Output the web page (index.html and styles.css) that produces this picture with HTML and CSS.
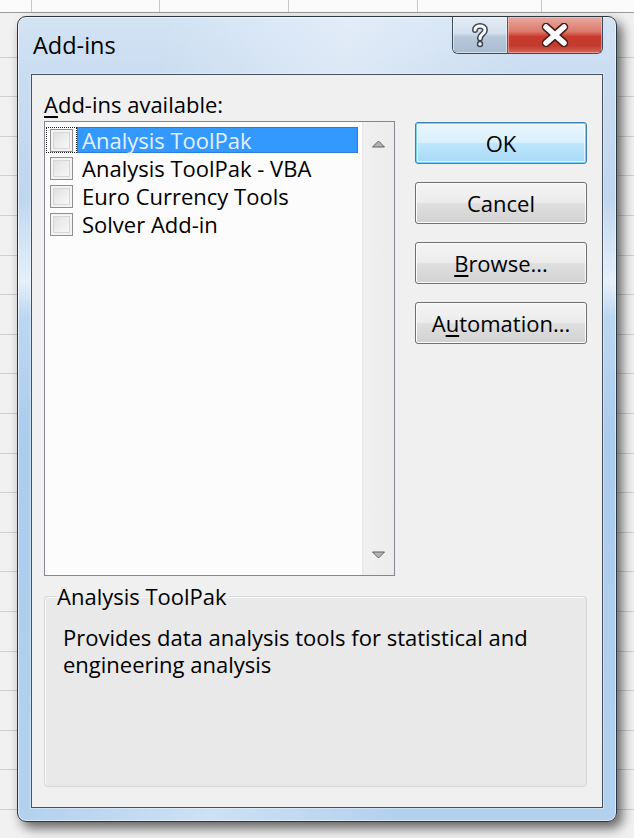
FILE: index.html
```html
<!DOCTYPE html>
<html lang="en">
<head>
<meta charset="utf-8">
<title>Add-ins</title>
<link rel="stylesheet" href="styles.css">
</head>
<body>
<div class="sheet-header">
  <div class="hcell c0"></div>
  <div class="hcell c1"></div>
  <div class="hcell c2"></div>
  <div class="hcell c3"></div>
  <div class="hcell c4"></div>
  <div class="hcell c5"></div>
</div>
<div class="window">
  <div class="titlebar">
    <div class="title">Add-ins</div>
    <div class="caption-buttons">
      <div class="cap-btn help">
        <svg width="20" height="26" viewBox="0 0 20 26">
          <path d="M5 8 C5 2.5 15 2.5 15 8 C15 12 10 12 10 16.5" fill="none" stroke="#3a4656" stroke-width="6" stroke-linecap="round"/>
          <circle cx="10" cy="22" r="3.2" fill="#3a4656"/>
          <path d="M5 8 C5 2.5 15 2.5 15 8 C15 12 10 12 10 16.5" fill="none" stroke="#ffffff" stroke-width="3" stroke-linecap="round"/>
          <circle cx="10" cy="22" r="1.7" fill="#ffffff"/>
        </svg>
      </div>
      <div class="cap-btn close">
        <svg width="30" height="24" viewBox="0 0 30 24">
          <path d="M6 4 L24 20 M24 4 L6 20" stroke="#4a1c18" stroke-width="8.5" stroke-linecap="round"/>
          <path d="M6 4 L24 20 M24 4 L6 20" stroke="#ffffff" stroke-width="5.5" stroke-linecap="round"/>
        </svg>
      </div>
    </div>
  </div>
  <div class="client">
    <div class="list-label"><u>A</u>dd-ins available:</div>
    <div class="main-row">
      <div class="listbox">
        <ul class="items">
          <li class="item">
            <span class="focus"><span class="check"></span></span>
            <span class="text selected">Analysis ToolPak</span>
          </li>
          <li class="item">
            <span class="nofocus"><span class="check"></span></span>
            <span class="text">Analysis ToolPak - VBA</span>
          </li>
          <li class="item">
            <span class="nofocus"><span class="check"></span></span>
            <span class="text">Euro Currency Tools</span>
          </li>
          <li class="item">
            <span class="nofocus"><span class="check"></span></span>
            <span class="text">Solver Add-in</span>
          </li>
        </ul>
        <div class="scrollbar">
          <svg class="arrow" width="13" height="8" viewBox="0 0 13 8">
            <path d="M0.5 7 L6.5 1 L12.5 7 Z" fill="#b4b4b4" stroke="#606060" stroke-width="1" stroke-linejoin="round"/>
          </svg>
          <svg class="arrow" width="13" height="8" viewBox="0 0 13 8">
            <path d="M0.5 1 L6.5 7 L12.5 1 Z" fill="#b4b4b4" stroke="#606060" stroke-width="1" stroke-linejoin="round"/>
          </svg>
        </div>
      </div>
      <div class="buttons">
        <div class="btn default">OK</div>
        <div class="btn">Cancel</div>
        <div class="btn"><u>B</u>rowse...</div>
        <div class="btn">A<u>u</u>tomation...</div>
      </div>
    </div>
    <fieldset class="group">
      <legend>Analysis ToolPak</legend>
      <p class="desc">Provides data analysis tools for statistical and engineering analysis</p>
    </fieldset>
  </div>
</div>
</body>
</html>
```

FILE: styles.css
```css
* { box-sizing: border-box; }

html, body {
  margin: 0;
  padding: 0;
}

body {
  width: 634px;
  height: 838px;
  overflow: hidden;
  font-family: "Open Sans", "Noto Sans", "DejaVu Sans", sans-serif;
  color: #000;
  background-color: #f1f1f1;
  background-image: repeating-linear-gradient(to bottom, transparent 0, transparent 38.6px, #cfcfcf 38.6px, #cfcfcf 39.6px);
  background-position: 0 18px;
}

.sheet-header {
  display: flex;
  height: 13px;
  background: #fbfbfb;
  border-bottom: 1px solid #9a9a9a;
}

.hcell {
  height: 100%;
  border-right: 1px solid #c8c8c8;
}
.c0 { width: 32px; }
.c1 { width: 128px; }
.c2 { width: 129px; }
.c3 { width: 129px; }
.c4 { width: 124px; }
.c5 { flex: 1; border-right: none; }

.window {
  width: 600px;
  height: 806px;
  margin: 3px 0 0 17px;
  border: 1px solid #2e3640;
  border-radius: 9px;
  padding: 0 13px 13px 13px;
  display: flex;
  flex-direction: column;
  background:
    linear-gradient(100deg, rgba(255,255,255,0) 20%, rgba(255,255,255,0.35) 45%, rgba(255,255,255,0) 70%),
    linear-gradient(to bottom, #d3e3f4 0, #cadcf1 60px, #bfd6ef 180px, #e6f0fa 265px, #bcd7f1 300px, #acccee 420px, #b3d1ef 100%);
  box-shadow: inset 0 0 0 1px rgba(255,255,255,0.55), 5px 6px 12px rgba(0,0,0,0.6);
}

.titlebar {
  height: 57px;
  display: flex;
  align-items: flex-start;
  flex-shrink: 0;
}

.title {
  font-size: 23.5px;
  line-height: 28px;
  padding: 14px 0 0 2px;
  margin-right: auto;
}

.caption-buttons {
  display: flex;
  height: 37px;
  border: 1px solid #3c4a5c;
  border-top: none;
  border-radius: 0 0 6px 6px;
  overflow: hidden;
}

.cap-btn {
  height: 100%;
  display: flex;
  align-items: center;
  justify-content: center;
}

.help {
  width: 55px;
  border-right: 1px solid #4d5d70;
  background: linear-gradient(to bottom, #e4ecf5 0, #d3dfec 45%, #b8c8da 55%, #a9bcd2 100%);
  box-shadow: inset 0 0 0 1px rgba(255,255,255,0.5);
}

.close {
  width: 94px;
  background: linear-gradient(to bottom, #e9aa9f 0, #dc7a6e 40%, #c9392c 55%, #c23b2f 80%, #d4675a 100%);
  box-shadow: inset 0 0 0 1px rgba(255,220,210,0.45);
}

.client {
  flex: 1;
  border: 1px solid #46505c;
  background: #f0f0f0;
  padding: 17px 14px 0 12px;
  display: flex;
  flex-direction: column;
  box-shadow: 0 0 0 1px rgba(255,255,255,0.35);
}

.list-label {
  font-size: 22px;
  line-height: 24px;
}

.list-label u, .btn u {
  text-decoration-thickness: 1.5px;
  text-underline-offset: 3px;
}

.main-row {
  display: flex;
  align-items: flex-start;
  margin-top: 5px;
}

.listbox {
  width: 351px;
  height: 455px;
  border: 1px solid #828790;
  background: #fcfcfc;
  display: flex;
}

.items {
  list-style: none;
  margin: 0;
  padding: 4px 4px 0 1px;
  flex: 1;
}

.item {
  height: 28px;
  display: flex;
  align-items: center;
}

.focus, .nofocus {
  width: 31px;
  height: 26px;
  display: flex;
  align-items: center;
  justify-content: center;
}

.focus {
  border: 1px dotted #1a1a1a;
}

.check {
  width: 23px;
  height: 23px;
  border: 1px solid #8e8f8f;
  background: linear-gradient(135deg, #dcdcdc 0, #f0f0f0 60%, #fafafa 100%);
  box-shadow: inset 0 0 0 2px #f4f4f4, inset 0 0 0 3px #d6d6d6;
}

.text {
  flex: 1;
  height: 26px;
  font-size: 22px;
  line-height: 26px;
  padding-left: 5px;
  white-space: nowrap;
}

.text.selected {
  background: #3399ff;
  color: #e3f0ff;
  border: 1px solid #2b7fd8;
  line-height: 24px;
  padding-left: 4px;
}

.scrollbar {
  width: 32px;
  background: linear-gradient(to right, #e6e6e6 0, #f0f0f0 2px, #ececec 100%);
  display: flex;
  flex-direction: column;
  justify-content: space-between;
  align-items: center;
  padding: 18px 0 16px;
}

.arrow { display: block; }

.buttons {
  margin-left: 20px;
  margin-top: 1px;
  display: flex;
  flex-direction: column;
  gap: 18px;
}

.btn {
  width: 172px;
  height: 42px;
  border: 1px solid #707070;
  border-radius: 3px;
  background: linear-gradient(to bottom, #f4f4f4 0, #ececec 48%, #dfdfdf 52%, #d2d2d2 100%);
  box-shadow: inset 0 0 0 1px #fcfcfc;
  font-size: 22px;
  line-height: 40px;
  text-align: center;
}

.btn.default {
  border-color: #3c7fb1;
  background: linear-gradient(to bottom, #eaf6fd 0, #d9f0fc 48%, #bee6fd 52%, #a7d9f5 100%);
  box-shadow: inset 0 0 0 1px #7ad3f5, inset 0 0 0 2px rgba(255,255,255,0.6);
}

.group {
  margin: 8px 1px 20px 0;
  padding: 0 10px 0 12px;
  flex: 1;
  border: 1px solid #d3d8dc;
  border-radius: 4px;
  background: #e9e9e9;
  box-shadow: inset 1px 1px 0 #fafafa;
  min-width: 0;
}

.group legend {
  font-size: 22px;
  line-height: 24px;
  padding: 0 2px 0 0;
}

.desc {
  margin: 16px 0 0 6px;
  font-size: 22px;
  line-height: 27px;
  width: 500px;
}
```
